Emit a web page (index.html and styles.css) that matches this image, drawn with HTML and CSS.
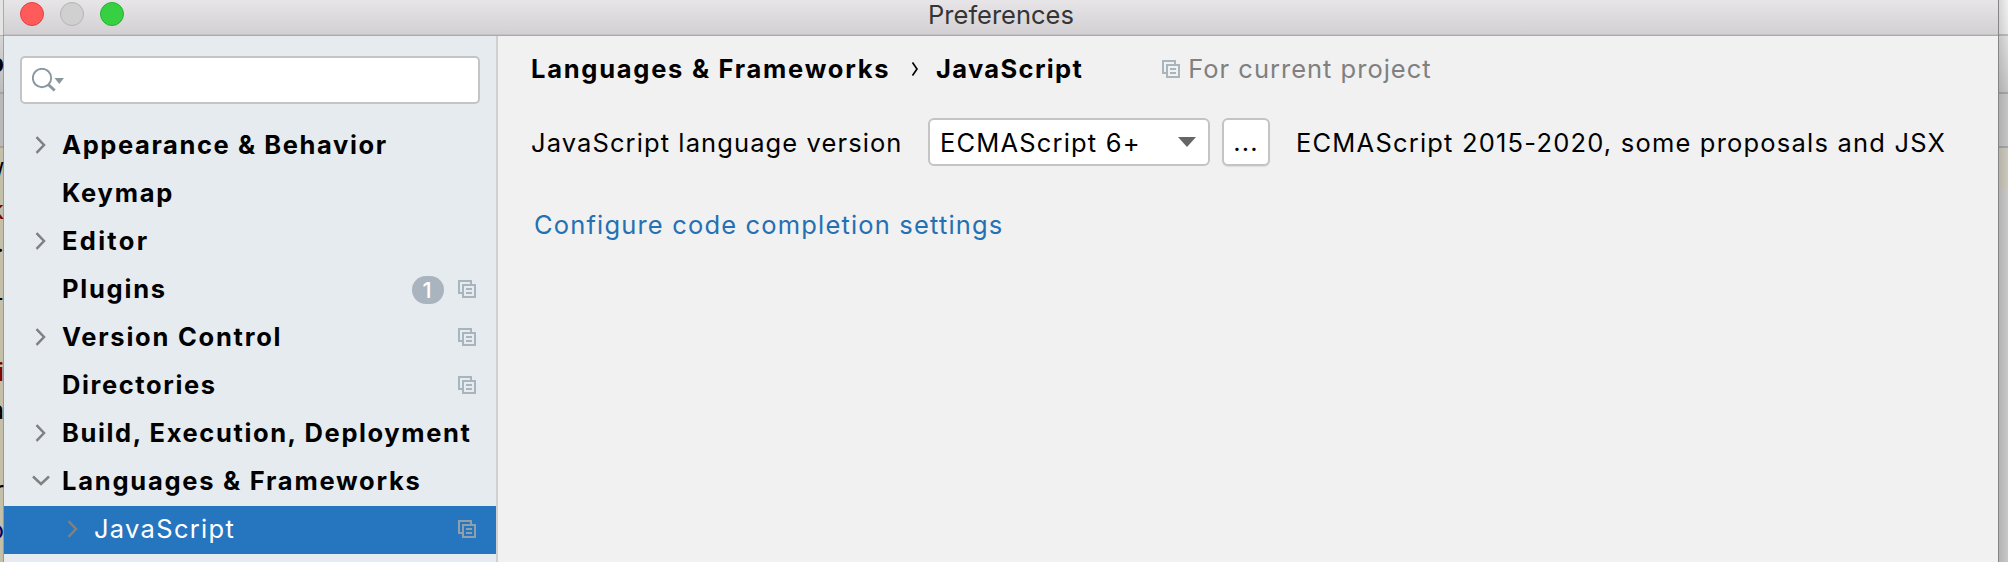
FILE: index.html
```
<!DOCTYPE html>
<html lang="en">
<head>
<meta charset="utf-8">
<title>Preferences</title>
<link rel="stylesheet" href="styles.css">
</head>
<body>
<svg class="symbols" width="0" height="0">
  <symbol id="right" viewBox="0 0 12 18"><path d="M1.500 1.200 9 9l-7.500 7.800" fill="none" stroke="#808080" stroke-width="2.500"/></symbol>
  <symbol id="down" viewBox="0 0 18 12"><path d="M1 1.500 9 9l8-7.500" fill="none" stroke="#808080" stroke-width="2.500"/></symbol>
  <symbol id="copy" viewBox="0 0 18 18"><path d="M4 13H1V1h12v3M5 5h12v12H5zM8 9h6M8 13h6" fill="none" stroke="currentColor" stroke-width="2"/></symbol>
</svg>
<div class="desktop">
  <div class="behind behind-left">
    <div class="frag f1">p</div>
    <div class="frag f2">/</div>
    <div class="frag f3 red">k</div>
    <div class="frag f4">.</div>
    <div class="frag f5">-</div>
    <div class="frag f6 red">i</div>
    <div class="frag f7">a</div>
    <div class="frag f8">r</div>
    <div class="frag f9 navy">o</div>
  </div>
  <main class="window">
    <header class="titlebar">
      <div class="lights"><i class="red-light"></i><i class="gray-light"></i><i class="green-light"></i></div>
      <span class="title">Preferences</span>
    </header>
    <div class="content">
      <nav class="sidebar">
        <div class="search">
          <svg width="34" height="26" viewBox="0 0 34 26"><g fill="none" stroke="#8b979f"><circle cx="10" cy="10" r="9.200" stroke-width="1.900"/><path d="m16.200 16.500 6.500 6" stroke-width="3"/></g><path d="M22.500 10h9.500l-4.700 6z" fill="#8b979f"/></svg>
        </div>
        <ul class="tree">
          <li class="tight"><svg class="arrow"><use href="#right"/></svg><span>Appearance &amp; Behavior</span></li>
          <li><span class="arrow"></span><span>Keymap</span></li>
          <li class="wide"><svg class="arrow"><use href="#right"/></svg><span>Editor</span></li>
          <li><span class="arrow"></span><span>Plugins</span><b class="badge">1</b><svg class="copy"><use href="#copy"/></svg></li>
          <li><svg class="arrow"><use href="#right"/></svg><span>Version Control</span><svg class="copy"><use href="#copy"/></svg></li>
          <li class="tight"><span class="arrow"></span><span>Directories</span><svg class="copy"><use href="#copy"/></svg></li>
          <li class="tight"><svg class="arrow"><use href="#right"/></svg><span>Build, Execution, Deployment</span></li>
          <li><svg class="arrow open"><use href="#down"/></svg><span>Languages &amp; Frameworks</span></li>
          <li class="selected"><svg class="arrow"><use href="#right"/></svg><span>JavaScript</span><svg class="copy"><use href="#copy"/></svg></li>
        </ul>
      </nav>
      <section class="panel">
        <div class="crumbs">
          <b>Languages &amp; Frameworks</b>
          <svg class="sep" viewBox="0 0 6 14"><path d="M.5.5 5 7 .5 13.500" fill="none" stroke="#000" stroke-width="1.700"/></svg>
          <b class="leaf">JavaScript</b>
          <svg class="copy"><use href="#copy"/></svg>
          <span class="scope">For current project</span>
        </div>
        <div class="version">
          <span class="label">JavaScript language version</span>
          <div class="select"><span>ECMAScript 6+</span><svg width="18" height="10" viewBox="0 0 18 10"><path d="M0 0h18L9 10z" fill="#666"/></svg></div>
          <div class="more">...</div>
          <span class="hint">ECMAScript 2015-2020, some proposals and JSX</span>
        </div>
        <a class="link">Configure code completion settings</a>
      </section>
    </div>
  </main>
  <div class="behind behind-right"></div>
</div>
</body>
</html>
```
FILE: styles.css
```
* { box-sizing: border-box; }
body { margin: 0; font-family: Inter, "Liberation Sans", sans-serif; font-size: 25.5px; color: #000; }
.symbols { position: absolute; }
.desktop { display: flex; width: 2008px; height: 562px; overflow: hidden; background: #c5c5c5; }
.behind { position: relative; flex: none; overflow: hidden; }
.behind-left { width: 4px; background: linear-gradient(90deg, transparent 3px, #77777788 3px), linear-gradient(#e4e4e4 0 35px, #b0b0b0 35px 36px, #d4d4d4 36px, #bdbdbd 92px, #a4a4a4 92px 94px, #b9b9b9 94px 146px, #a5a397 146px 148px, #c4bfa9 148px); }
.behind-right { width: 10px; background: linear-gradient(90deg, #858585 1px, #0000001a 1px, transparent 10px), linear-gradient(#f0f0f0, #e6e6e6 34px, #b9b9b9 34px 36px, #dedede 36px, #c4c4c4 92px, #a5a5a5 92px 94px, #c5c5c5 94px 146px, #a5a5a5 146px 148px, #cbc7bb 148px 190px, #c8c8c8 190px); }
.frag { position: absolute; right: 0; line-height: 28px; font-size: 25px; }
.f1 { top: 49px; font-weight: 600; }
.f2 { top: 158px; }
.f3 { top: 196px; }
.f4 { top: 229px; }
.f5 { top: 284px; }
.f6 { top: 358px; }
.f7 { top: 396px; }
.f8 { top: 476px; }
.f9 { top: 516px; }
.red { color: #700; }
.navy { color: #006; }
.window { width: 1994px; flex: none; display: flex; flex-direction: column; background: #f1f1f1; }
.titlebar { height: 36px; flex: none; display: grid; grid-template-columns: 1fr auto 1fr; border-bottom: 1px solid #ababab; background: linear-gradient(#e8e5e8, #d2d0d2 34px, #c4c2c4 34px); }
.lights { display: flex; gap: 16px; padding: 2px 0 0 16px; }
.lights i { width: 24px; height: 24px; border-radius: 50%; border-width: 1px; border-style: solid; }
.red-light { background: #ff5b5a; border-color: #e24245; }
.gray-light { background: #d0d0d0; border-color: #b4b4b4; }
.green-light { background: #37d043; border-color: #22b42b; }
.title { line-height: 30px; color: #353535; }
.content { flex: 1; display: flex; }
.sidebar { width: 494px; flex: none; border-right: 2px solid #d0d0d0; background: #e5ebef; padding-top: 20px; }
.search { height: 48px; margin: 0 16px; border: 2px solid #c4c4c4; border-radius: 5px; background: #fff; padding: 10px; }
.search svg { display: block; }
.tree { list-style: none; margin: 18px 0 0; padding: 0; font-weight: 700; letter-spacing: 1.76px; }
.tree li { height: 48px; display: flex; align-items: center; padding: 0 20px 3px 31px; white-space: nowrap; }
.tree .tight { letter-spacing: 1.6px; }
.tree .wide { letter-spacing: 2.3px; }
.arrow { width: 12px; height: 18px; margin-right: 15px; flex: none; }
.arrow.open { width: 18px; height: 12px; margin: 0 12px 0 -3px; }
.copy { width: 18px; height: 18px; color: #a9b5bc; flex: none; }
.tree .copy { margin-left: auto; }
.tree .selected { background: #2675bf; color: #fff; font-weight: 400; letter-spacing: 1.3px; padding-left: 63px; }
.selected .copy { color: #8f9fac; }
.badge { margin: 3px 0 0 auto; width: 32px; height: 28px; border-radius: 14px; background: #a9b4be; color: #fff; font-size: 22px; font-weight: 500; line-height: 28px; text-align: center; letter-spacing: 0; padding-right: 2px; }
.tree .badge + .copy { margin-left: 14px; }
.panel { flex: 1; padding-left: 33px; white-space: nowrap; letter-spacing: 1.17px; }
.crumbs { display: flex; align-items: center; height: 66px; padding-bottom: 1px; }
.crumbs b { letter-spacing: 1.74px; width: 381px; }
.crumbs .leaf { width: auto; letter-spacing: 1.35px; margin-left: -1px; }
.sep { width: 6px; height: 14px; margin-right: 19px; }
.crumbs .copy { margin-left: 79px; margin-right: 8px; }
.scope { color: #808080; letter-spacing: 1px; }
.version { display: flex; align-items: center; height: 48px; margin-top: 16px; }
.label { width: 397px; letter-spacing: 1.1px; }
.select { width: 282px; height: 48px; display: flex; align-items: center; justify-content: space-between; background: #fff; border: 2px solid #c4c4c4; border-radius: 6px; padding: 0 12px 0 10px; }
.more { width: 48px; height: 48px; margin: 0 26px 0 12px; border: 2px solid #c4c4c4; border-radius: 6px; background: #fff; box-shadow: 0 1px 1px #ddd; text-align: center; line-height: 44px; }
.hint { letter-spacing: 1.2px; }
.link { display: block; margin: 43px 0 0 3px; line-height: 32px; color: #2470b3; }
```
